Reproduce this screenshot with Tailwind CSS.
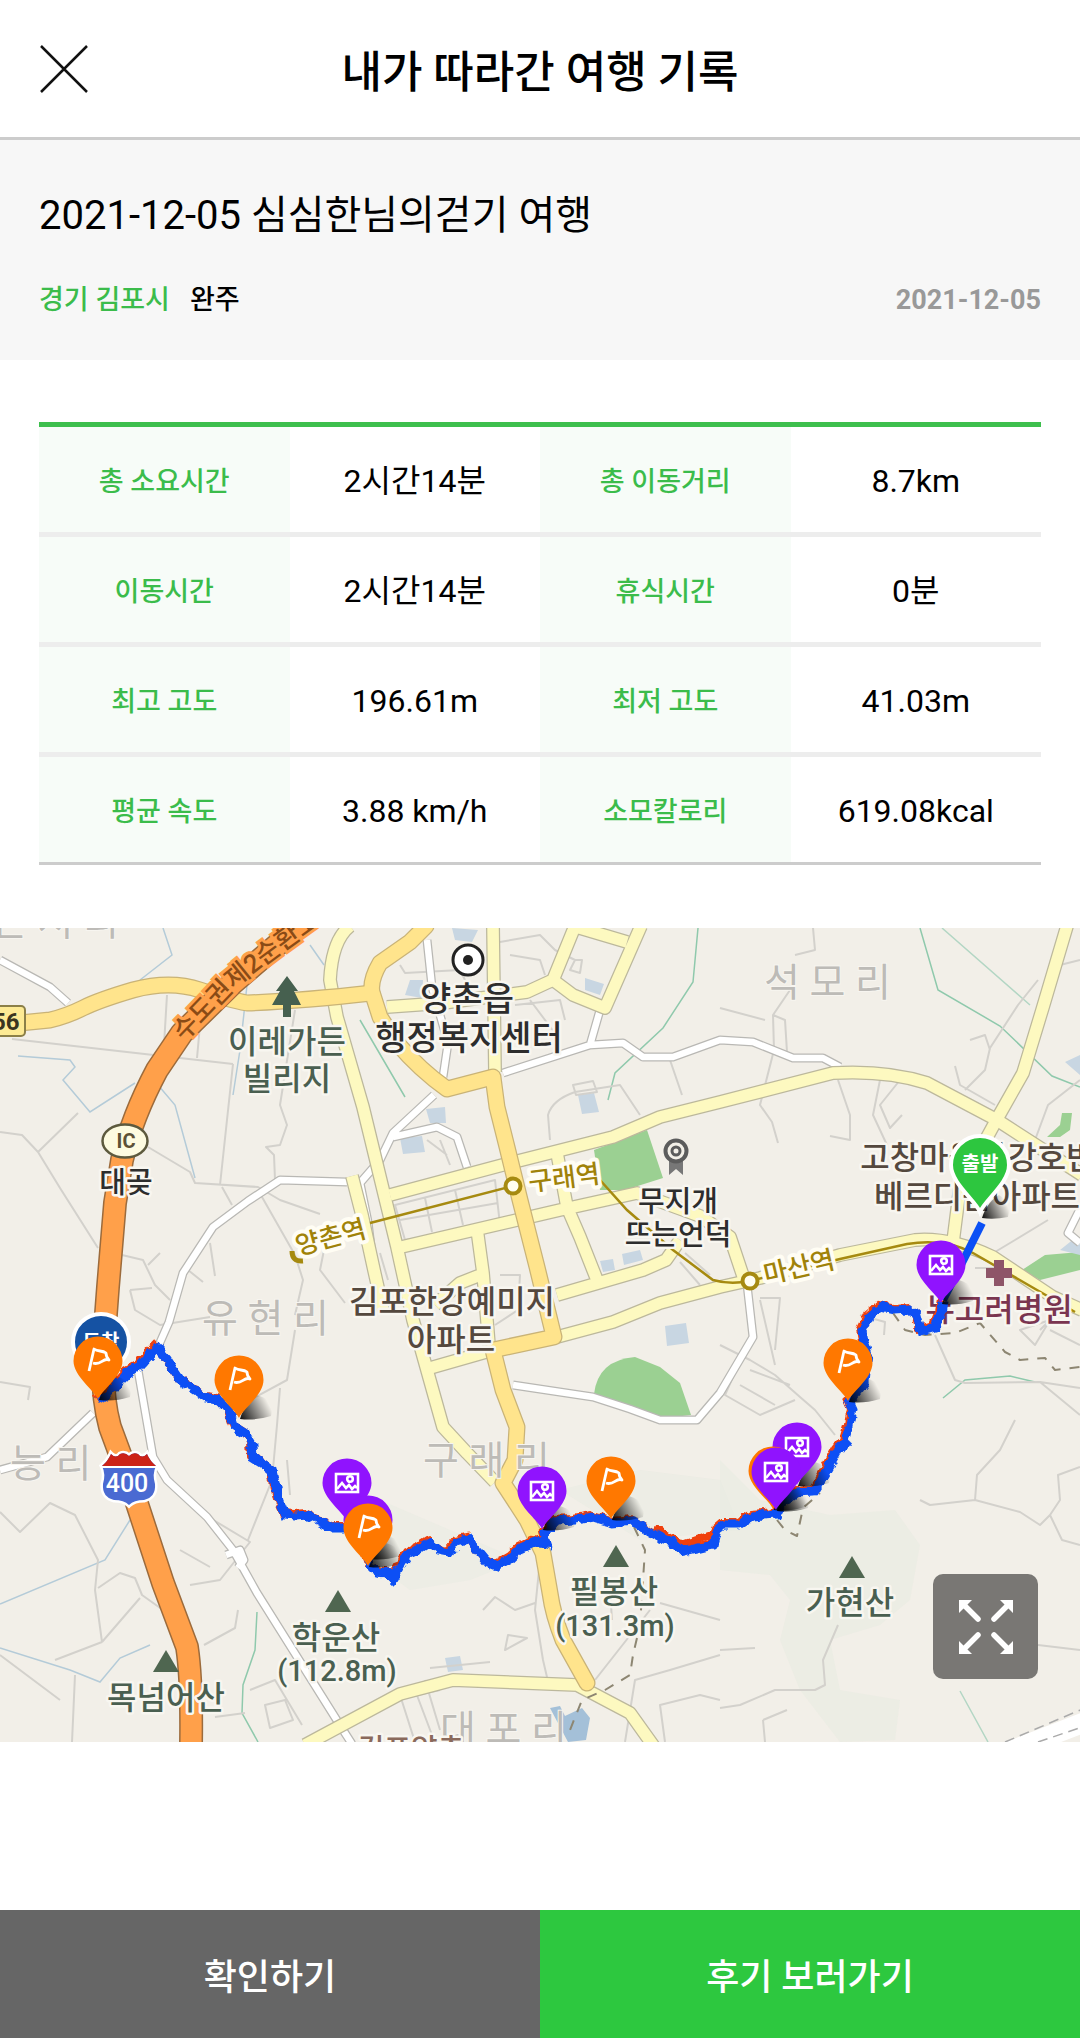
<!DOCTYPE html>
<html lang="ko">
<head>
  <meta charset="UTF-8" />
  <meta name="viewport" content="width=device-width, initial-scale=1.0" />
  <title>내가 따라간 여행 기록</title>

  <!-- Tailwind CSS -->
  <script src="https://cdn.jsdelivr.net/npm/@tailwindcss/browser@4"></script>
</head>
<body class="flex min-h-screen flex-col bg-white font-[Roboto,'Noto_Sans_CJK_KR',sans-serif] text-black">

  <!-- Header -->
  <header class="relative flex h-[140px] items-center justify-center border-b-3 border-[#cccccc]">
    <button type="button" aria-label="닫기" class="absolute left-10">
      <svg class="size-12" viewBox="0 0 48 48" fill="none" stroke="#111" stroke-width="2.5">
        <path d="M1 1 47 47M47 1 1 47" />
      </svg>
    </button>
    <h1 class="pt-2 text-[44px] font-medium">내가 따라간 여행 기록</h1>
  </header>

  <!-- Trip title -->
  <section class="bg-[#f7f7f7] px-[39px] pt-12 pb-10">
    <h2 class="text-[40px] leading-14">2021-12-05 심심한님의걷기 여행</h2>
    <div class="mt-9 flex items-center text-[27px] leading-10 font-medium">
      <span class="text-[#3bbc4b]">경기 김포시</span>
      <span class="ml-5">완주</span>
      <time class="ml-auto font-bold text-[#999999]" datetime="2021-12-05">2021-12-05</time>
    </div>
  </section>

  <main>
    <!-- Stats -->
    <div class="px-[39px] pt-[62px] pb-[63px]">
      <table class="w-full table-fixed border-separate border-spacing-0 border-t-5 border-[#3dbf4d] text-center text-[32px]">
        <tbody id="stats"></tbody>
      </table>
    </div>

    <!-- Map -->
    <div class="relative">
      <svg class="block h-auto w-full overflow-hidden bg-[#f2efe8]" viewBox="0 928 1080 814" role="img" aria-label="이동 경로 지도">
        <defs>
          <linearGradient id="shade" x1="0" y1="1" x2="1" y2="0.6">
            <stop offset="0" stop-color="#000" stop-opacity="0.95" />
            <stop offset="1" stop-color="#000" stop-opacity="0" />
          </linearGradient>
          <filter id="rough" x="-5%" y="-5%" width="110%" height="110%">
            <feTurbulence type="fractalNoise" baseFrequency="0.12" numOctaves="2" seed="4" />
            <feDisplacementMap in="SourceGraphic" scale="8" xChannelSelector="R" yChannelSelector="G" />
          </filter>
          <path id="drop" d="M0 38C-4 29-24.5 15-24.5 0a24.5 24.5 0 1 1 49 0C24.5 15 4 29 0 38Z" />
          <path id="shadow" d="M1 39C4 28 12 18 18 15Q36 20 32 36Q16 41 1 39Z" fill="url(#shade)" />
          <g id="photo-pin">
            <use href="#shadow" />
            <use href="#drop" fill="#9013fe" />
            <g fill="none" stroke="#fff" stroke-width="2.6">
              <rect x="-11" y="-9" width="22" height="18" />
              <circle cx="3" cy="-4" r="2.8" />
              <path d="M-10 6-5 0-1 5 2 2 5 6 8 3 10 5" />
            </g>
          </g>
          <g id="flag-pin">
            <use href="#shadow" />
            <use href="#drop" fill="#ff7800" />
            <path d="M-9 10-4-12C0-9 4-11 8-8Q8-4 11-1C5-4 3 5-5 2" fill="none" stroke="#fff" stroke-width="2.8" stroke-linejoin="round" />
          </g>
          <path id="peak" d="M0-11 13 11H-13Z" fill="#4f6650" />
          <path id="route" d="M98 1400 108 1394 116 1384 127 1372 140 1365 148 1356 157 1347 166 1357 173 1368 182 1381 194 1388 207 1397 219 1399 229 1410 235 1426 246 1433 252 1443 253 1457 264 1464 272 1470 276 1486 279 1500 285 1514 296 1515 307 1514 320 1520 333 1527 347 1527 362 1540 370 1565 378 1571 386 1572 393 1578 400 1566 408 1553 419 1548 430 1541 439 1549 449 1551 457 1541 469 1538 477 1549 487 1561 497 1565 511 1557 521 1547 534 1541 547 1543 545 1532 556 1520 575 1519 593 1516 613 1522 633 1520 645 1528 660 1537 672 1541 683 1551 700 1547 713 1544 717 1529 724 1523 740 1523 753 1515 777 1513 784 1500 797 1491 815 1490 822 1478 829 1466 838 1450 845 1441 850 1424 853 1409 849 1400 858 1391 865 1382 868 1353 864 1341 862 1330 869 1316 881 1306 894 1309 909 1308 917 1315 921 1330 935 1326 941 1312 943 1300" />
          <g id="minor-roads">
            <path d="M0 960 50 987 68 1003M347 1182 280 1180 248 1201 213 1227 183 1273 169 1322 158 1347M138 1370 153 1457 167 1480 207 1517 233 1550 257 1593 343 1730 352 1744M0 1470 47 1457 93 1413M226 1555 240 1550 244 1560 238 1568" />
            <path d="M427 940 432 987 448 1043 443 1077M434 1095 393 1133 380 1160 360 1183 368 1222 372 1255M393 1137 437 1127 457 1137 467 1167M503 1073 590 1045 623 1043 643 1057 673 1057 720 1040 753 1042 793 1058 823 1058 840 1067M590 1045 600 1010" />
            <path d="M513 1385 593 1397 630 1409 660 1420 697 1420 720 1393 753 1337 747 1284M1080 1209 1068 1233 1080 1243" />
          </g>
          <g id="local-roads">
            <path d="M350 926Q332 940 330 980L337 1017 363 1107 380 1177 397 1247 413 1320 427 1370 443 1427 467 1453 495 1482" />
            <path d="M493 926 495 1072M387 1007 443 1003 527 992 553 980 575 926M553 980 573 995 605 1008 641 926M573 926 627 942M390 1195 510 1163 613 1137 660 1117 720 1102 833 1073Q887 1070 927 1083L997 1120 1082 1175" />
            <path d="M352 1176 362 1215 374 1270 383 1310M397 1248 560 1210 637 1193 700 1216 730 1237 745 1282M557 1153 567 1207 580 1237 597 1280M557 1295 643 1270 666 1260 680 1240M477 1229 483 1273 489 1345M483 1274 460 1283 435 1305M430 1368 493 1350M1067 926 1043 1007 1023 1073 997 1119 960 1187 953 1242" />
            <path d="M557 1337 613 1322 660 1303 720 1287 760 1278 840 1255 915 1240Q950 1237 993 1257L1053 1297 1082 1310M305 1745 400 1694 453 1680 577 1685 630 1713 655 1748" />
          </g>
          <g id="main-roads">
            <path d="M20 1023 50 1020Q67 1016 83 1008T133 990Q170 980 200 990T247 1003Q300 1001 372 993" />
            <path d="M426 926 410 942 380 963Q370 980 372 992L380 1017 397 1043Q420 1070 447 1089L493 1077 497 1107 507 1147 520 1200 537 1267 554 1337 493 1350 503 1390 517 1427 515 1460 503 1483 527 1520 543 1553 550 1593Q553 1615 563 1640L587 1683" />
          </g>
          <path id="highway" d="M312 915 233 983 182 1033 157 1070Q132 1117 122 1160L115 1203 108 1287 104 1340Q100 1390 110 1427L127 1473 163 1583 187 1647Q192 1680 191 1745" />
        </defs>

        <!-- Hills -->
        <g fill="#e8ebe1">
          <path d="M720 1460 760 1500 830 1515 895 1510 920 1545 910 1600 880 1625 830 1640 840 1690 900 1700 895 1740 840 1742 800 1690 780 1640 790 1600 770 1575 720 1570Z" opacity="0.6" />
          <path d="M380 1500 450 1530 520 1560 470 1580 410 1590 370 1560ZM560 1490 640 1470 720 1480 740 1530 640 1540Z" opacity="0.5" />
        </g>

        <!-- Parks -->
        <g fill="#9bd092">
          <path d="M594 1150 647 1130 663 1178 625 1190 600 1190Z" />
          <path d="M594 1394Q598 1360 635 1357L660 1367 680 1383 691 1415 665 1418Z" />
          <path d="M1022 1270 1045 1255 1080 1252V1270L1040 1280ZM1047 1137 1060 1125 1062 1113 1072 1113 1070 1130 1060 1137Z" />
        </g>

        <!-- Buildings and ponds -->
        <g fill="#c8d6e2">
          <path d="M452 928 478 930 472 942 455 940ZM410 980 423 980 422 998 405 995ZM585 978 604 984 600 995 585 990ZM426 1109 445 1107 446 1123 430 1123ZM400 1138 422 1136 425 1152 403 1154ZM578 1095 594 1093 599 1112 582 1114ZM600 1261 613 1259 615 1270 603 1272ZM622 1254 640 1250 643 1260 624 1265Z" />
          <path d="M665 1326 686 1323 689 1343 667 1346ZM1065 1062 1080 1055V1075ZM445 1658 460 1656 463 1670 448 1672ZM1060 1250 1075 1238 1080 1245V1255Z" />
          <path d="M550 1708 560 1706 565 1716 582 1708 590 1718 586 1740 568 1742Z" fill="#a4c0d8" />
        </g>

        <!-- Streams -->
        <g fill="none" stroke="#b4cbd8" stroke-width="1.5">
          <path d="M163 928 172 955 140 980M18 1056 70 1060 75 1067 63 1080 90 1112 135 1083M158 1085 175 1105 195 1178M247 985 240 1050 233 1095M310 945 324 965M0 1604 105 1560 130 1520M0 1648 70 1670 100 1682 120 1658 150 1645" />
          <g stroke="#8fc9ac">
            <path d="M698 928 693 982 663 1028 615 1073 608 1100M920 928 938 990 1000 1026 1052 1076 1080 1087M360 1020 405 1097M943 1398 965 1380 1010 1376 1035 1382M257 1612 255 1650 243 1685 242 1713 258 1742" />
          </g>
          <path d="M942 928 1030 1005M960 1691 988 1742" stroke="#b3d6c4" />
        </g>

        <!-- Lanes -->
        <g fill="none" stroke="#d3d1cc" stroke-width="2" stroke-linejoin="round">
          <path d="M12 1039 233 1064M167 995 164 1045M200 1025 197 1058M0 1132 22 1135 38 1152 60 1188 98 1248M38 1152 78 1113M148 1147 190 1172 195 1183 258 1187 280 1200 320 1214M233 1064 220 1185M295 1010 280 1105 287 1125 280 1145 266 1147 274 1155 275 1180M222 1187 232 1205M258 1190 295 1255 303 1280 295 1315M326 1240 320 1270 345 1303M122 1255 143 1260 155 1285 170 1300M148 1265 160 1253M130 1290 152 1288M130 1290 135 1310 160 1325 210 1317M210 1243 215 1276M188 1270 203 1282" />
          <path d="M0 1512 20 1532 50 1503 75 1515 98 1560 95 1590 102 1642M98 1588 120 1573 135 1578 142 1595 163 1610M102 1642 140 1598M102 1642 55 1660M75 1675 72 1742M200 1512 250 1542 220 1580 190 1585M180 1550 210 1567M204 1645 235 1628 238 1610M280 1388 277 1425 272 1480 248 1540M287 1460 290 1495M295 1330 287 1380 250 1400M245 1713 215 1717M250 1690 275 1680 302 1725M265 1705 285 1700 293 1720 270 1728ZM0 1382 30 1387 28 1400M0 1655 60 1700" />
          <path d="M400 965 405 973 460 970 470 990M500 942 540 935 555 950 575 960M510 955 540 960 545 975M575 960 570 970 580 973 582 960ZM515 1005 560 1000 565 1020M530 1000 560 1040M395 1205 495 1180 500 1225 405 1240ZM425 1198 432 1232M455 1190 463 1225M400 1220 498 1203M550 1140 548 1115Q552 1100 575 1092L620 1085 640 1115M573 1085 593 1081 597 1092 576 1095ZM670 1060 682 1095M440 1140 450 1165M427 1140 447 1155M500 1275 520 1275 518 1310 495 1325M380 1253 388 1280M685 1253 710 1275M680 1262 700 1285" />
          <path d="M813 928 815 950 795 955M790 990 773 1015 774 1050 760 1105 772 1122 778 1143M773 1015 785 1020 787 1052M720 1008 765 1020M838 1080 850 1115 850 1140 830 1136M880 1080 873 1115 887 1145M900 1080 880 1105 890 1128 902 1115M1038 980 1018 1005 990 1048 985 1070 965 1090M970 1040 985 1035 990 1050M955 1066 960 1085 995 1105M1080 960 1060 965M1080 1080 1048 1105 1035 1140M1048 1220 1015 1240 990 1255M975 1268 1010 1268M935 1335 955 1380 965 1383 1040 1382 1080 1415M1040 1382 1080 1388M1040 1330 1070 1300M1020 1330 1035 1345 1050 1320ZM1050 1330 1080 1345" />
          <path d="M720 1345 750 1360 775 1375 800 1397 815 1410 835 1435M760 1300 775 1365M760 1298 780 1298 775 1350M745 1350 725 1395 760 1415 795 1400M750 1370 790 1385M740 1385 775 1405M860 1315 885 1322 884 1335M920 1500 930 1505 975 1500 1020 1512 1040 1525 1050 1515 1062 1540 1080 1545M975 1500 977 1475 1000 1450 1015 1420M1050 1515 1060 1500 1058 1475 1080 1467M838 1625 823 1660 825 1685 815 1690 775 1690 740 1705 720 1708M763 1720 787 1710M763 1720 765 1742M720 1650 755 1648M1038 1645 1080 1650" />
          <path d="M483 1610 495 1597 515 1610 535 1603M540 1560 535 1610 543 1660 550 1690M508 1635 527 1638 505 1650ZM595 1680 650 1610M660 1603 720 1620M625 1742 635 1680 670 1670 720 1655M665 1742 660 1705 700 1695 720 1700M430 1668 490 1662M400 1695 415 1742M415 1690 432 1735M425 1680 440 1730M395 1700 440 1690M610 1590 612 1620" />
        </g>

        <!-- Roads: casing first, fill on top -->
        <g fill="none" stroke-linejoin="round">
          <use href="#minor-roads" stroke="#b9b8b4" stroke-width="9" />
          <use href="#minor-roads" stroke="#fff" stroke-width="6.5" />
          <use href="#local-roads" stroke="#bcb89c" stroke-width="14" />
          <use href="#local-roads" stroke="#fdf9c0" stroke-width="11.5" />
          <use href="#main-roads" stroke="#c9b377" stroke-width="17" stroke-linecap="round" />
          <use href="#main-roads" stroke="#ffe48c" stroke-width="14.5" stroke-linecap="round" />
          <use href="#highway" stroke="#9c6b3c" stroke-width="24" />
          <use href="#highway" stroke="#ffa04a" stroke-width="21" />
          <path d="M1000 1755 1085 1722" stroke="#fff" stroke-width="20" />
          <path d="M1005 1742 1085 1708M1038 1742 1085 1726" stroke="#aaa" stroke-width="1.5" stroke-dasharray="10 6" />
          <path d="M893 1313 905 1330 925 1335 955 1333 980 1323 1005 1352 1020 1360 1045 1358 1055 1370 1080 1367M777 1520 785 1530 797 1536 803 1508 820 1493M634 1527 645 1550 643 1580 640 1625 633 1655 630 1675 605 1690 582 1700 570 1730" stroke="#8d8672" stroke-width="2" stroke-dasharray="10 9" />
        </g>

        <!-- Subway line -->
        <g fill="none" stroke="#a68a10" stroke-width="2.5">
          <path d="M370 1223 513 1186M600 1180 627 1210 650 1230 673 1250 713 1280Q730 1285 750 1281L840 1259 907 1244Q945 1238 973 1253L1037 1290 1075 1312" />
          <path d="M292 1251Q292 1262 303 1261" stroke-width="5" />
          <g fill="#fffef0" stroke-width="4">
            <circle cx="513" cy="1186" r="7.5" />
            <circle cx="750" cy="1281" r="7.5" />
          </g>
        </g>

        <!-- District names -->
        <g class="text-[39px]" fill="#bdbbb7" stroke="#f7f5f0" stroke-width="2" paint-order="stroke">
          <text x="-8" y="935">은 서 리</text>
          <text x="764" y="996">석 모 리</text>
          <text x="202" y="1332">유 현 리</text>
          <text x="10" y="1477">능 리</text>
          <text x="423" y="1474">구 래 리</text>
          <text x="440" y="1743">대 포 리</text>
        </g>

        <!-- Place names -->
        <g class="text-[32px] font-medium" text-anchor="middle" stroke="#f8f6f0" stroke-width="5" stroke-linejoin="round" paint-order="stroke">
          <g fill="#4a5f50">
            <text x="287" y="1053">이레가든</text>
            <text x="287" y="1090">빌리지</text>
            <text x="166" y="1709">목넘어산</text>
            <text x="336" y="1649">학운산</text>
            <text x="337" y="1681" class="text-[29px]">(112.8m)</text>
            <text x="614" y="1603">필봉산</text>
            <text x="615" y="1636" class="text-[29px]">(131.3m)</text>
            <text x="850" y="1614">가현산</text>
          </g>
          <g fill="#2d2d2d">
            <text x="467" y="1011" class="text-[34px]">양촌읍</text>
            <text x="469" y="1050" class="text-[34px]">행정복지센터</text>
            <text x="126" y="1193" class="text-[29px]">대곶</text>
            <text x="678" y="1212" class="text-[29px]">무지개</text>
            <text x="678" y="1245" class="text-[29px]">뜨는언덕</text>
          </g>
          <g fill="#54483e">
            <text x="452" y="1313">김포한강예미지</text>
            <text x="451" y="1351">아파트</text>
            <text x="978" y="1169">고창마을한강호반</text>
            <text x="977" y="1208">베르디움아파트</text>
          </g>
          <text x="999" y="1321" fill="#7a3550">뉴고려병원</text>
          <text x="411" y="1760" fill="#8a6a5c" class="text-[29px]">김포양촌</text>
          <g class="text-[26px]" fill="#a08208" stroke="#fffdf4" stroke-width="8">
            <text transform="translate(565 1187) rotate(-7)">구래역</text>
            <text transform="translate(333 1246) rotate(-15)">양촌역</text>
            <text transform="translate(801 1276) rotate(-13)">마산역</text>
          </g>
        </g>
        <path id="highway-name" d="M184 1042 236 988Q262 966 330 918" fill="none" />
        <text class="text-[26px] font-medium" fill="#8a4b16" stroke="#ffa04a" stroke-width="6" paint-order="stroke"><textPath href="#highway-name">수도권제2순환고속</textPath></text>

        <!-- Map symbols -->
        <g>
          <path d="M287 976 298 991H294L301 1005H291V1017H283V1005H272L280 991H276Z" fill="#46604f" />
          <use href="#peak" x="166" y="1661" />
          <use href="#peak" x="338" y="1601" />
          <use href="#peak" x="616" y="1556" />
          <use href="#peak" x="852" y="1567" />
          <circle cx="468" cy="960" r="15" fill="#fff" stroke="#222" stroke-width="3" />
          <circle cx="468" cy="960" r="5" fill="#222" />
          <path d="M669 1160V1175L676 1169 683 1175V1160Z" fill="#777" />
          <circle cx="676" cy="1151" r="10.5" fill="#f3f0e8" stroke="#5c5c5c" stroke-width="4" />
          <circle cx="676" cy="1151" r="4" fill="none" stroke="#5c5c5c" stroke-width="3" />
          <path d="M994 1260H1004V1268H1012V1278H1004V1286H994V1278H986V1268H994Z" fill="#8e5568" />
          <ellipse cx="125" cy="1141" rx="22.5" ry="16.5" fill="#fdfbe0" stroke="#5d5a3e" stroke-width="2.5" />
          <text x="126" y="1148" text-anchor="middle" class="text-[20px] font-bold" fill="#5d5236">IC</text>
          <rect x="-20" y="1006" width="45" height="30" rx="4" fill="#fdea94" stroke="#8b7f48" stroke-width="2" />
          <text x="-8" y="1030" class="text-[24px] font-bold" fill="#3a3520">56</text>
          <path d="M102 1466Q108 1461 111 1454 116 1459 120 1454 125 1452 129 1456 133 1452 138 1454 142 1459 147 1454 150 1461 156 1466Q152 1474 155 1484 156 1497 144 1500 134 1500 129 1505 124 1500 114 1500 102 1497 103 1484 106 1474 102 1466Z" fill="#4a6ad2" stroke="#fff" stroke-width="5" paint-order="stroke" />
          <path d="M102 1466Q108 1461 111 1454 116 1459 120 1454 125 1452 129 1456 133 1452 138 1454 142 1459 147 1454 150 1461 156 1466Z" fill="#cc2217" />
          <path d="M102 1467H156" stroke="#fff" stroke-width="2" />
          <text x="127" y="1492" text-anchor="middle" class="text-[25px] font-medium" fill="#fff">400</text>
        </g>

        <!-- Route -->
        <g fill="none" filter="url(#rough)">
          <use href="#route" x="-2" y="-1" stroke="#f0400f" stroke-width="8" />
          <path d="M655 1528 683 1544 713 1534" stroke="#f0400f" stroke-width="7" />
          <use href="#route" y="1" stroke="#0b50f5" stroke-width="9" />
        </g>
        <path d="M943 1300 967 1253 982 1223" fill="none" stroke="#0b50f5" stroke-width="8" />

        <!-- Pins -->
        <g>
          <circle cx="101" cy="1342" r="28" fill="#1552a3" stroke="#fff" stroke-width="4" />
          <text x="101" y="1349" text-anchor="middle" class="text-[20px] font-bold" fill="#fff">도착</text>
          <use href="#flag-pin" x="98" y="1361" />
          <use href="#flag-pin" x="239" y="1380" />
          <use href="#photo-pin" x="347" y="1483" />
          <use href="#photo-pin" x="368" y="1520" />
          <use href="#flag-pin" x="368" y="1528" />
          <use href="#photo-pin" x="542" y="1491" />
          <use href="#flag-pin" x="611" y="1481" />
          <use href="#photo-pin" x="797" y="1447" />
          <use href="#flag-pin" x="773" y="1471" />
          <use href="#photo-pin" x="776" y="1472" />
          <use href="#flag-pin" x="848" y="1363" />
          <use href="#photo-pin" x="941" y="1265" />
          <path d="M982 1218C985 1207 993 1198 999 1195Q1012 1202 1008 1217 994 1220 982 1218Z" fill="url(#shade)" />
          <path d="M980 1212C975 1200 951 1183 951 1165A29 29 0 1 1 1009 1165C1009 1183 985 1200 980 1212Z" fill="#2dc63f" stroke="#fff" stroke-width="4" />
          <text x="980" y="1171" text-anchor="middle" class="text-[20px] font-bold" fill="#fff">출발</text>
        </g>
      </svg>

      <button type="button" aria-label="지도 확대" class="absolute right-[42px] bottom-[63px] flex size-[105px] items-center justify-center rounded-[10px] bg-black/50">
        <svg class="size-[54px]" viewBox="0 0 54 54">
          <path d="M5 5 19 19M49 5 35 19M5 49 19 35M49 49 35 35" stroke="#fff" stroke-width="5.5" stroke-linecap="round" />
          <path d="M0 0H13L9 4 4 9 0 13ZM54 0V13L45 4 41 0ZM0 54V41L9 50 13 54ZM54 54H41L45 50 54 41Z" fill="#fff" />
        </svg>
      </button>
    </div>
  </main>

  <!-- Bottom buttons -->
  <footer class="mt-auto grid h-32 grid-cols-2 text-[36px] font-medium text-white">
    <button type="button" class="bg-[#666666] pt-2">확인하기</button>
    <button type="button" class="bg-[#2dc83f] pt-2">후기 보러가기</button>
  </footer>

  <script>
    const stats = [
      [["총 소요시간", "2시간14분"], ["총 이동거리", "8.7km"]],
      [["이동시간", "2시간14분"], ["휴식시간", "0분"]],
      [["최고 고도", "196.61m"], ["최저 고도", "41.03m"]],
      [["평균 속도", "3.88 km/h"], ["소모칼로리", "619.08kcal"]]
    ];

    document.getElementById("stats").innerHTML = stats.map((row, i) => {
      const line = i === stats.length - 1
        ? "h-[108px] border-b-3 border-[#cccccc]"
        : "h-[110px] border-b-5 border-[#ededed]";
      return `<tr>${row.map(([label, value]) => `
        <th scope="row" class="${line} bg-[#f7fcf8] pt-1.5 text-[27px] font-medium text-[#3bbc4b]">${label}</th>
        <td class="${line} pt-0.5">${value}</td>
      `).join('')}</tr>`;
    }).join('');
  </script>
</body>
</html>
